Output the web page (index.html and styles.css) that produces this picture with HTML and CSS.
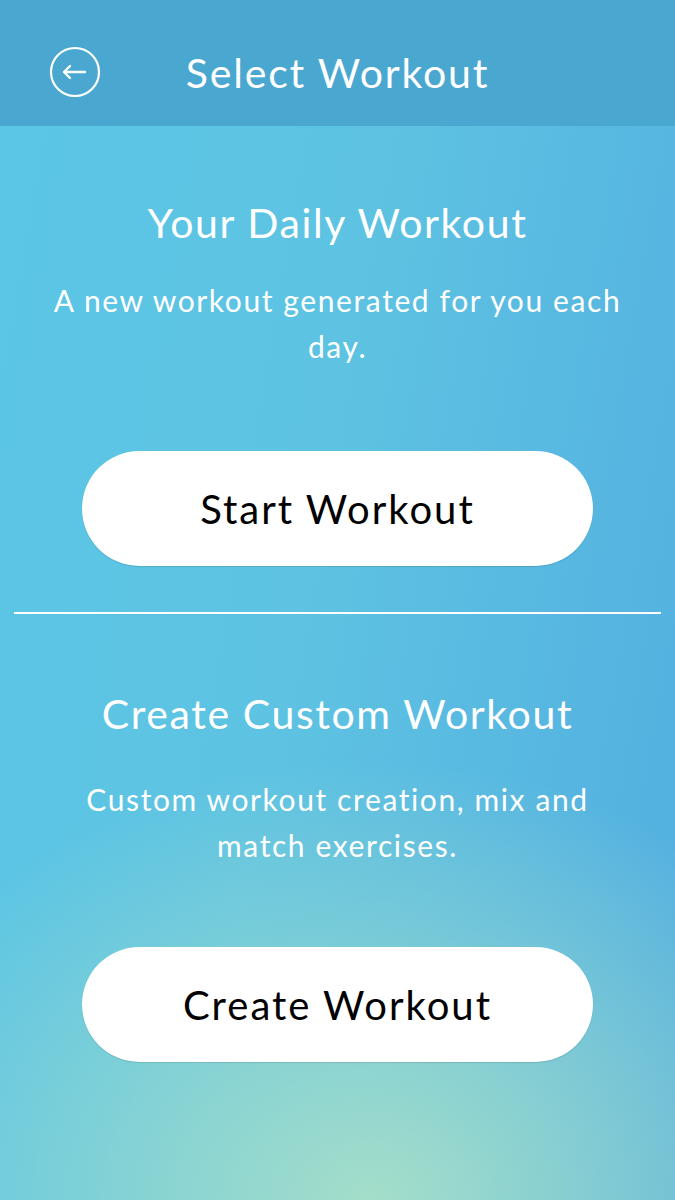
FILE: index.html
```html
<!DOCTYPE html>
<html lang="en">
<head>
    <meta charset="UTF-8">
    <meta name="viewport" content="width=device-width, initial-scale=1.0">
    <title>Select Workout</title>
    <link rel="stylesheet" href="styles.css">
</head>
<body>
    <div class="page">
        <div class="topbar">
            <a class="back" href="#">
                <svg width="52" height="52" viewBox="0 0 52 52">
                    <circle cx="26" cy="26" r="24" fill="none" stroke="#fff" stroke-width="2.2"/>
                    <path d="M15 26 H36 M15 26 L21 20 M15 26 L21 32" fill="none" stroke="#fff" stroke-width="2.4" stroke-linecap="round" stroke-linejoin="round"/>
                </svg>
            </a>
            <h1>Select Workout</h1>
            <div></div>
        </div>

        <section class="block daily">
            <h2>Your Daily Workout</h2>
            <p>A new workout generated for you each day.</p>
            <button type="button" class="pill">Start Workout</button>
        </section>

        <div class="divider"></div>

        <section class="block custom">
            <h2>Create Custom Workout</h2>
            <p>Custom workout creation, mix and match exercises.</p>
            <button type="button" class="pill">Create Workout</button>
        </section>
    </div>
</body>
</html>
```

FILE: styles.css
```css
body{
    margin: 0;
    padding: 0;
    font-family: Lato, "Noto Sans", sans-serif;
}
.page{
    width: 675px;
    height: 1200px;
    overflow: hidden;
    background:
        radial-gradient(ellipse 540px 440px at 55% 100%, rgba(168, 224, 200, 0.95), rgba(168, 224, 200, 0) 100%),
        linear-gradient(100deg, #5bc6e6 0%, #5ec3e2 45%, #52aee0 100%);
}
.topbar{
    height: 108px;
    padding-top: 18px;
    background-color: #4aa8d0;
    display: grid;
    grid-template-columns: 1fr auto 1fr;
    align-items: center;
    color: white;
}
.back{
    display: flex;
    margin-left: 49px;
}
.topbar h1{
    margin: 0;
    font-size: 41px;
    font-weight: 400;
    letter-spacing: 1.8px;
}
.block{
    text-align: center;
    color: white;
    display: flex;
    flex-direction: column;
    align-items: center;
}
.block h2{
    margin: 0;
    font-size: 41px;
    font-weight: 400;
    letter-spacing: 1.6px;
}
.block p{
    margin: 0;
    font-size: 30px;
    line-height: 46px;
    letter-spacing: 1.6px;
}
.daily{
    padding-top: 72px;
}
.daily h2{
    margin-bottom: 30px;
}
.daily p{
    width: 600px;
}
.custom{
    padding-top: 75px;
}
.custom h2{
    margin-bottom: 38px;
}
.custom p{
    width: 520px;
}
.pill{
    width: 511px;
    height: 115px;
    border: none;
    border-radius: 58px;
    background-color: white;
    box-shadow: 0 1px 1px rgba(0, 0, 0, 0.12);
    color: #000;
    font-family: Lato, "Noto Sans", sans-serif;
    font-size: 40px;
    letter-spacing: 2px;
    margin-top: 82px;
    cursor: pointer;
}
.custom .pill{
    margin-top: 79px;
}
.divider{
    height: 2px;
    background-color: white;
    margin: 46px 14px 0 14px;
}
```
